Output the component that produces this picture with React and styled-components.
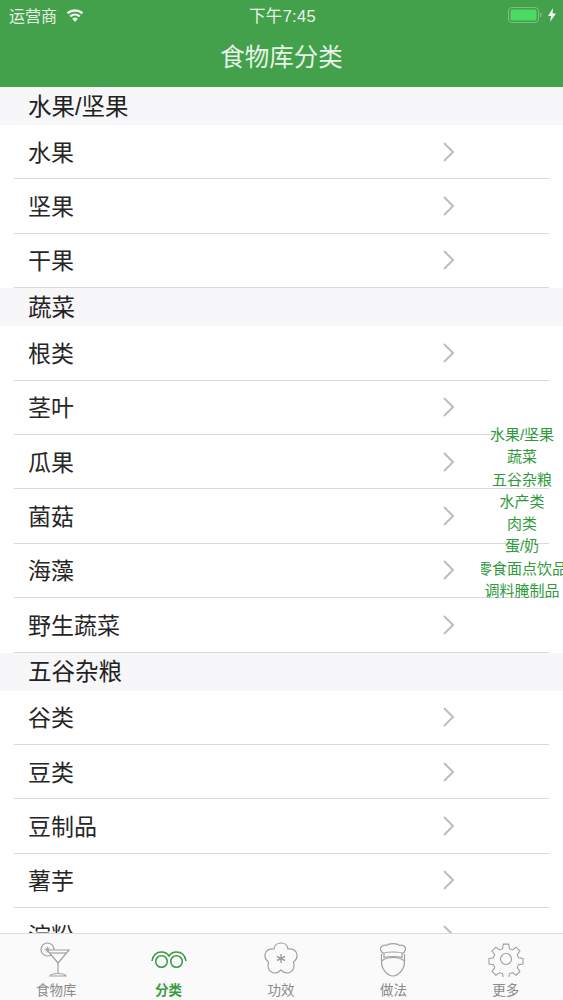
import React from "react";
import styled, { createGlobalStyle } from "styled-components";

const GlobalStyle = createGlobalStyle`
  html, body {
    margin: 0;
    padding: 0;
    height: 100%;
    background: #fff;
    font-family: "Liberation Sans", "Noto Sans CJK SC", sans-serif;
  }
  #root {
    height: 100%;
  }
`;

const Page = styled.div`
  position: relative;
  display: flex;
  flex-direction: column;
  width: 563px;
  height: 1000px;
  overflow: hidden;
  background: #fff;
`;

const Header = styled.header`
  flex: none;
  height: 87px;
  background: #43a04b;
  color: #fff;
`;

const StatusBar = styled.div`
  display: grid;
  grid-template-columns: 1fr auto 1fr;
  align-items: center;
  height: 30px;
  padding: 0 7px 0 9px;
`;

const Carrier = styled.div`
  display: flex;
  align-items: center;
  gap: 8px;
  font-size: 16px;
  color: #e4f2e5;
`;

const Clock = styled.div`
  font-size: 16.5px;
  letter-spacing: 0.3px;
  color: #e9f5ea;
`;

const Battery = styled.div`
  display: flex;
  align-items: center;
  justify-content: flex-end;
  gap: 6px;
`;

const Title = styled.h1`
  margin: 0;
  padding-top: 10px;
  font-size: 24.5px;
  line-height: 36px;
  font-weight: 400;
  text-align: center;
  color: #e6f3e7;
`;

const List = styled.main`
  flex: 1;
  min-height: 0;
  overflow: hidden;
`;

const SectionTitle = styled.div`
  display: flex;
  align-items: center;
  height: 38px;
  padding: 0 0 3px 28px;
  background: #f7f6f8;
  font-size: 23.5px;
  color: #222;
  box-sizing: border-box;
`;

const Row = styled.div`
  display: flex;
  align-items: center;
  justify-content: space-between;
  box-sizing: border-box;
  height: 54.4px;
  margin-left: 14px;
  width: 535px;
  padding: 0 94px 2px 14px;
  border-bottom: 1px solid #d9d9d9;
  font-size: 23px;
  color: #262626;
`;

const ChevronIcon = styled.svg`
  margin-top: 2px;
`;

const SideIndex = styled.nav`
  position: absolute;
  top: 424px;
  right: 0;
  width: 82px;
  overflow: hidden;
`;

const IndexItem = styled.div`
  display: flex;
  justify-content: center;
  height: 22.3px;
  line-height: 22.3px;
  font-size: 15px;
  white-space: nowrap;
  color: #2f9a3c;
`;

const TabBar = styled.footer`
  flex: none;
  display: grid;
  grid-template-columns: repeat(5, 1fr);
  height: 67px;
  box-sizing: border-box;
  border-top: 1px solid #dcdcdc;
  background: #fafafa;
  padding: 0 1px 0 0;
`;

const Tab = styled.div`
  display: flex;
  flex-direction: column;
  align-items: center;
  color: ${(props) => (props.active ? "#3c9a45" : "#8a8a8a")};
`;

const TabIcon = styled.div`
  display: flex;
  align-items: center;
  justify-content: center;
  height: 50px;
  color: ${(props) => (props.active ? "#3c9a45" : "#a0a0a0")};
`;

const TabLabel = styled.span`
  font-size: 13.5px;
  line-height: 14px;
  font-weight: ${(props) => (props.active ? 700 : 400)};
`;

const Chevron = () => (
  <ChevronIcon width="13" height="20" viewBox="0 0 13 20" fill="none" stroke="#bdbdbd" strokeWidth="2">
    <path d="M2 1l9 9-9 9" />
  </ChevronIcon>
);

const Wifi = () => (
  <svg width="20" height="14" viewBox="0 0 18 13" fill="#eef7ef">
    <path d="M9 13l-2.600-3.100a4 4 0 0 1 5.200 0z" />
    <path d="M5.300 8.600L3.900 7a7.800 7.800 0 0 1 10.200 0l-1.400 1.600a5.700 5.700 0 0 0-7.400 0z" />
    <path d="M2.800 5.700L1.300 4a11.800 11.800 0 0 1 15.400 0l-1.500 1.700a9.500 9.500 0 0 0-12.400 0z" />
  </svg>
);

const BatteryIcon = () => (
  <svg width="34" height="18" viewBox="0 0 34 18">
    <rect x="0.5" y="1.5" width="30" height="15" rx="3.5" fill="none" stroke="#7cc083" />
    <rect x="2.500" y="3.500" width="26" height="11" rx="2" fill="#4cd964" />
    <rect x="32" y="7" width="1.500" height="4" fill="#7cc083" />
  </svg>
);

const Bolt = () => (
  <svg width="8" height="14" viewBox="0 0 8 14" fill="#eef7ef">
    <path d="M5 0L0 8h3l-1 6 6-8.500H4.600z" />
  </svg>
);

const CocktailIcon = () => (
  <svg width="36" height="36" viewBox="0 0 36 36" fill="none" stroke="currentColor" strokeWidth="1.2">
    <circle cx="9.500" cy="8.500" r="6.500" />
    <path d="M6.500 8.500h6M9.500 5.500v6M7.500 6.500l4 4M11.500 6.500l-4 4" strokeWidth="0.8" />
    <path d="M9 9h22L20 22z" fill="#fafafa" />
    <path d="M12 12h16" />
    <path d="M20 22v11M12 35c1-2 4-2.500 8-2.500s7 .5 8 2.500z" />
  </svg>
);

const GlassesIcon = () => (
  <svg width="36" height="24" viewBox="0 0 36 24" fill="none" stroke="currentColor" strokeWidth="1.5">
    <circle cx="10.500" cy="14.500" r="5.800" />
    <circle cx="25.500" cy="14.500" r="5.800" />
    <path d="M1 14C2 8 6 5 10.500 5c3.500 0 6 1.500 7.500 4 1.500-2.500 4-4 7.500-4C30 5 34 8 35 14" />
  </svg>
);

const FlowerIcon = () => (
  <svg width="36" height="36" viewBox="0 0 36 36" fill="none" stroke="currentColor" strokeWidth="1.2">
    <path d="M18 2c4 0 6.500 2.500 7 6 4-.5 8.500 1 9 5.500.4 3.500-1.500 6-3.500 7.500 1 4 .5 8-3 10-3.500 1.800-7 .5-9.500-2-2.500 2.500-6 3.800-9.500 2-3.500-2-4-6-3-10-2-1.500-3.900-4-3.500-7.500C2.500 9 7 7.500 11 8c.5-3.500 3-6 7-6z" />
    <path d="M18 13v9M14 15.500l8 4M22 15.500l-8 4" strokeWidth="1.400" />
  </svg>
);

const ChefIcon = () => (
  <svg width="28" height="36" viewBox="0 0 28 36" fill="none" stroke="currentColor" strokeWidth="1.2">
    <path d="M5 12.500C1.500 11 .5 7.500 2.500 5.500 4 4 6 4 7.500 4.500 9.500 2 18.500 2 20.500 4.500 22 4 24 4 25.500 5.500c2 2 1 5.500-2.500 7" />
    <path d="M5 12.500c0-1 4-1.500 9-1.500s9 .5 9 1.500v4c-5-1-13-1-18 0z" />
    <path d="M2.500 13v8c0 7 6 14 11.500 14s11.500-7 11.500-14v-8" />
    <path d="M2.500 20c3-2.500 6-3.500 11.500-3.500s8.500 1 11.500 3.500" />
  </svg>
);

const GearIcon = () => (
  <svg width="36" height="36" viewBox="0 0 36 36" fill="none" stroke="currentColor" strokeWidth="1.2">
    <circle cx="18" cy="18" r="5.500" />
    <path d="M15 1.500h6l.8 5 3.300 1.400 4.200-3 4.200 4.300-3 4.100 1.400 3.300 5 .9v6l-5 .8-1.400 3.300 3 4.200-4.200 4.200-4.200-3-3.300 1.400-.8 5h-6l-.8-5-3.300-1.400-4.200 3-4.200-4.200 3-4.200-1.400-3.300-5-.8v-6l5-.9 1.400-3.300-3-4.100 4.200-4.300 4.200 3L14.200 6.500z" transform="translate(1.800 1.800) scale(0.9)" />
  </svg>
);

const sections = [
  { title: "水果/坚果", items: ["水果", "坚果", "干果"] },
  { title: "蔬菜", items: ["根类", "茎叶", "瓜果", "菌菇", "海藻", "野生蔬菜"] },
  { title: "五谷杂粮", items: ["谷类", "豆类", "豆制品", "薯芋", "淀粉"] },
];

const indexItems = ["水果/坚果", "蔬菜", "五谷杂粮", "水产类", "肉类", "蛋/奶", "零食面点饮品", "调料腌制品"];

const tabs = [
  { label: "食物库", icon: <CocktailIcon /> },
  { label: "分类", icon: <GlassesIcon />, active: true },
  { label: "功效", icon: <FlowerIcon /> },
  { label: "做法", icon: <ChefIcon /> },
  { label: "更多", icon: <GearIcon /> },
];

const App = () => (
  <Page>
    <GlobalStyle />
    <Header>
      <StatusBar>
        <Carrier>
          运营商
          <Wifi />
        </Carrier>
        <Clock>下午7:45</Clock>
        <Battery>
          <BatteryIcon />
          <Bolt />
        </Battery>
      </StatusBar>
      <Title>食物库分类</Title>
    </Header>
    <List>
      {sections.map((section) => (
        <section key={section.title}>
          <SectionTitle>{section.title}</SectionTitle>
          {section.items.map((item) => (
            <Row key={item}>
              {item}
              <Chevron />
            </Row>
          ))}
        </section>
      ))}
    </List>
    <SideIndex>
      {indexItems.map((item) => (
        <IndexItem key={item}>{item}</IndexItem>
      ))}
    </SideIndex>
    <TabBar>
      {tabs.map((tab) => (
        <Tab key={tab.label} active={tab.active}>
          <TabIcon active={tab.active}>{tab.icon}</TabIcon>
          <TabLabel active={tab.active}>{tab.label}</TabLabel>
        </Tab>
      ))}
    </TabBar>
  </Page>
);

export default App;
